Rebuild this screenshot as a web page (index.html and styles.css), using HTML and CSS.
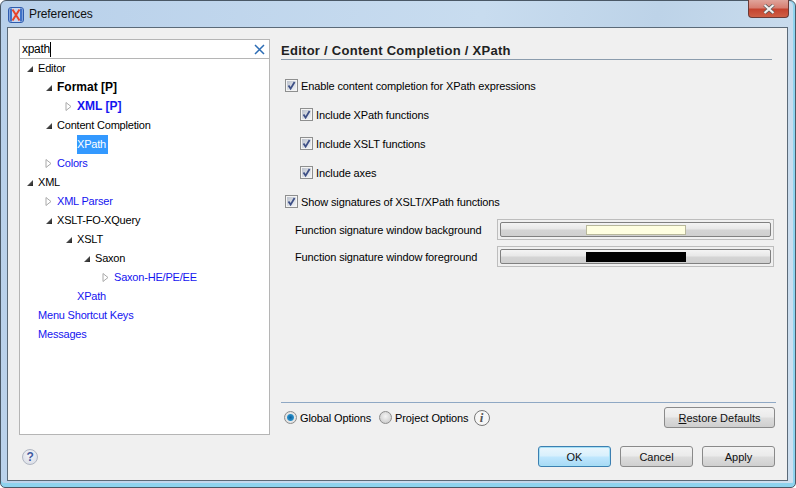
FILE: index.html
```html
<!DOCTYPE html>
<html lang="en">
<head>
  <meta charset="UTF-8">
  <title>Preferences</title>
  <link rel="stylesheet" href="styles.css">
</head>
<body>
  <svg class="defs" width="0" height="0">
    <defs>
      <linearGradient id="boxfill" x1="0" y1="0" x2="1" y2="1">
        <stop offset="0" stop-color="#bcc2cd"/>
        <stop offset="1" stop-color="#f2f4f7"/>
      </linearGradient>
      <linearGradient id="arrowfill" x1="0" y1="0" x2="1" y2="1">
        <stop offset="0" stop-color="#777"/>
        <stop offset="1" stop-color="#222"/>
      </linearGradient>
      <symbol id="check" viewBox="0 0 13 13">
        <rect x="0.5" y="0.5" width="12" height="12" fill="#f4f4f4" stroke="#8e8f8f"/>
        <rect x="2" y="2" width="9" height="9" fill="url(#boxfill)"/>
        <path d="M3.5 6.5 L5.6 9.6 L9.6 3" fill="none" stroke="#3d4f86" stroke-width="1.8"/>
      </symbol>
      <symbol id="open" viewBox="0 0 9 9">
        <path d="M8 2 V8 H2 Z" fill="url(#arrowfill)"/>
      </symbol>
      <symbol id="closed" viewBox="0 0 9 11">
        <path d="M2 1.5 L7 5.5 L2 9.5 Z" fill="#fff" stroke="#a9a9a9"/>
      </symbol>
    </defs>
  </svg>

  <div class="window">
    <div class="titlebar">
      <svg class="app-icon" width="16" height="16" viewBox="0 0 16 16">
        <rect x="0.5" y="0.5" width="15" height="15" rx="2.5" fill="#c9d6ee" stroke="#2f5cae"/>
        <rect x="1.5" y="1.5" width="2.5" height="13" fill="#3f72c8"/>
        <rect x="12" y="1.5" width="2.5" height="13" fill="#3f72c8"/>
        <path d="M4.5 2.5 L11.5 13.5 M11.5 2.5 L4.5 13.5" stroke="#e8432a" stroke-width="2"/>
      </svg>
      <span class="title">Preferences</span>
      <div class="close">
        <svg width="14" height="10" viewBox="0 0 14 10">
          <path d="M2.5 1 L11.5 9 M11.5 1 L2.5 9" stroke="#5a5a5a" stroke-width="3.6"/>
          <path d="M2.5 1 L11.5 9 M11.5 1 L2.5 9" stroke="#f2f2f2" stroke-width="2.2"/>
        </svg>
      </div>
    </div>

    <div class="client">
      <div class="main">
        <div class="left">
          <div class="search">
            <span class="search-text">xpath</span><span class="caret"></span>
            <svg class="search-clear" width="11" height="11" viewBox="0 0 11 11">
              <path d="M1 1 L10 10 M10 1 L1 10" stroke="#2d6db5" stroke-width="1.5"/>
            </svg>
          </div>
          <ul class="tree">
            <li class="row d0"><svg class="arrow"><use href="#open" width="9" height="9" y="1"/></svg><span>Editor</span></li>
            <li class="row d1 bold"><svg class="arrow"><use href="#open" width="9" height="9" y="1"/></svg><span>Format [P]</span></li>
            <li class="row d2 bold link"><svg class="arrow"><use href="#closed" width="9" height="11"/></svg><span>XML [P]</span></li>
            <li class="row d1"><svg class="arrow"><use href="#open" width="9" height="9" y="1"/></svg><span>Content Completion</span></li>
            <li class="row d2 leaf"><span class="selected">XPath</span></li>
            <li class="row d1 link"><svg class="arrow"><use href="#closed" width="9" height="11"/></svg><span>Colors</span></li>
            <li class="row d0"><svg class="arrow"><use href="#open" width="9" height="9" y="1"/></svg><span>XML</span></li>
            <li class="row d1 link"><svg class="arrow"><use href="#closed" width="9" height="11"/></svg><span>XML Parser</span></li>
            <li class="row d1"><svg class="arrow"><use href="#open" width="9" height="9" y="1"/></svg><span>XSLT-FO-XQuery</span></li>
            <li class="row d2"><svg class="arrow"><use href="#open" width="9" height="9" y="1"/></svg><span>XSLT</span></li>
            <li class="row d3"><svg class="arrow"><use href="#open" width="9" height="9" y="1"/></svg><span>Saxon</span></li>
            <li class="row d4 link"><svg class="arrow"><use href="#closed" width="9" height="11"/></svg><span>Saxon-HE/PE/EE</span></li>
            <li class="row d2 link leaf"><span>XPath</span></li>
            <li class="row d0 link leaf"><span>Menu Shortcut Keys</span></li>
            <li class="row d0 link leaf"><span>Messages</span></li>
          </ul>
        </div>

        <div class="right">
          <h2 class="heading">Editor / Content Completion / XPath</h2>
          <div class="options">
            <label class="option"><svg class="box"><use href="#check"/></svg>Enable content completion for XPath expressions</label>
            <label class="option sub"><svg class="box"><use href="#check"/></svg>Include XPath functions</label>
            <label class="option sub"><svg class="box"><use href="#check"/></svg>Include XSLT functions</label>
            <label class="option sub"><svg class="box"><use href="#check"/></svg>Include axes</label>
            <label class="option"><svg class="box"><use href="#check"/></svg>Show signatures of XSLT/XPath functions</label>
          </div>
          <div class="colors">
            <div class="color-row">
              <span class="color-label">Function signature window background</span>
              <div class="color-frame"><div class="color-btn"><span class="swatch swatch-bg"></span></div></div>
            </div>
            <div class="color-row">
              <span class="color-label">Function signature window foreground</span>
              <div class="color-frame"><div class="color-btn"><span class="swatch swatch-fg"></span></div></div>
            </div>
          </div>
          <div class="scope">
            <span class="radio radio-on"></span><span class="scope-label">Global Options</span>
            <span class="radio"></span><span class="scope-label">Project Options</span>
            <span class="info">i</span>
            <button class="btn btn-restore"><u>R</u>estore Defaults</button>
          </div>
        </div>
      </div>

      <div class="footer">
        <span class="help">?</span>
        <div class="actions">
          <button class="btn btn-ok">OK</button>
          <button class="btn">Cancel</button>
          <button class="btn">Apply</button>
        </div>
      </div>
    </div>
  </div>
</body>
</html>
```

FILE: styles.css
```css
* {
  box-sizing: border-box;
}
html, body {
  margin: 0;
  padding: 0;
  background: #fff;
}
body {
  width: 796px;
  height: 488px;
  overflow: hidden;
  font-family: "Liberation Sans", Arial, sans-serif;
  font-size: 11px;
  letter-spacing: -0.12px;
  color: #000;
}
.defs {
  position: absolute;
}

.window {
  width: 796px;
  height: 488px;
  display: flex;
  flex-direction: column;
  border: 1px solid #4a5866;
  border-radius: 6px 6px 5px 5px;
  background: linear-gradient(100deg, #b8d0ea 0%, #c8dcef 55%, #bdd3e8 75%, #cfe0f0 100%);
  box-shadow: inset 0 -4px 0 #8ed3ee, inset -2px 0 0 #8ed3ee;
}

.titlebar {
  height: 26px;
  flex: none;
  display: flex;
  align-items: center;
  padding-left: 7px;
  position: relative;
}
.app-icon {
  margin-top: 2px;
}
.title {
  margin-left: 5px;
  font-size: 12px;
  letter-spacing: -0.1px;
  color: #111;
}
.close {
  position: absolute;
  top: -1px;
  right: 6px;
  width: 41px;
  height: 18px;
  display: flex;
  align-items: center;
  justify-content: center;
  border: 1px solid #6b3a36;
  border-top: none;
  border-radius: 0 0 4px 4px;
  background: linear-gradient(#e0a49b 0%, #d77f72 45%, #c5432f 55%, #cf5f45 100%);
}

.client {
  flex: 1;
  margin: 0 7px 6px 6px;
  display: flex;
  flex-direction: column;
  border: 1px solid #5b6a78;
  background: #f0f0f0;
  min-height: 0;
}

.main {
  flex: 1;
  display: flex;
  padding: 11px 3px 0 11px;
  min-height: 0;
}
.left {
  width: 251px;
  flex: none;
  height: 396px;
  display: flex;
  flex-direction: column;
  border: 1px solid #b5b5b5;
  background: #fff;
}
.search {
  height: 19px;
  flex: none;
  display: flex;
  align-items: center;
  padding: 0 4px 0 2px;
  border-bottom: 1px solid #b5b5b5;
  font-size: 12px;
  letter-spacing: -0.3px;
}
.caret {
  width: 1px;
  height: 15px;
  background: #000;
}
.search-clear {
  margin-left: auto;
}

.tree {
  list-style: none;
  margin: 0;
  padding: 0;
  letter-spacing: -0.2px;
}
.row {
  height: 19px;
  display: flex;
  align-items: center;
  white-space: nowrap;
}
.row span {
  margin-bottom: 2px;
}
.arrow {
  width: 9px;
  height: 11px;
  margin-right: 4px;
  flex: none;
}
.d0 { padding-left: 5px; }
.d1 { padding-left: 24px; }
.d2 { padding-left: 44px; }
.d3 { padding-left: 62px; }
.d4 { padding-left: 81px; }
.leaf { margin-left: 13px; }
.bold {
  font-weight: bold;
  font-size: 12px;
  letter-spacing: 0;
}
.link { color: #1414f0; }
.row .selected {
  display: block;
  margin-bottom: 0;
  height: 19px;
  line-height: 18px;
  width: 31px;
  background: #3399ff;
  color: #fff;
}

.right {
  flex: 1;
  min-width: 0;
  margin-left: 11px;
  display: flex;
  flex-direction: column;
}
.heading {
  margin: 0;
  height: 21px;
  padding-top: 4px;
  width: 491px;
  font-size: 13px;
  letter-spacing: 0.27px;
  font-weight: bold;
  color: #222;
  border-bottom: 1px solid #8b9cad;
}
.options {
  margin-top: 18px;
  display: flex;
  flex-direction: column;
  gap: 14px;
}
.option {
  height: 15px;
  display: flex;
  align-items: center;
  padding-left: 4px;
}
.option.sub {
  padding-left: 19px;
}
.box {
  width: 13px;
  height: 13px;
  margin-right: 3px;
  flex: none;
}

.colors {
  margin-top: 10px;
  display: flex;
  flex-direction: column;
  gap: 6px;
}
.color-row {
  display: flex;
  align-items: center;
  padding-left: 14px;
}
.color-label {
  width: 202px;
  flex: none;
  white-space: nowrap;
}
.color-frame {
  width: 277px;
  height: 21px;
  padding: 2px;
  border: 1px solid #bdbdbd;
}
.color-btn {
  height: 15px;
  display: flex;
  align-items: center;
  justify-content: center;
  border: 1px solid #808080;
  border-radius: 2px;
  background: linear-gradient(#f4f4f4 0%, #e8e8e8 45%, #d4d4d4 55%, #cfcfcf 100%);
}
.swatch {
  width: 100px;
  height: 10px;
}
.swatch-bg {
  background: #ffffe1;
  border: 1px solid #b8b89c;
}
.swatch-fg {
  background: #000;
}

.scope {
  margin-top: auto;
  width: 495px;
  height: 34px;
  display: flex;
  align-items: center;
  border-top: 1px solid #8fa8c4;
  padding: 0 1px 4px 3px;
}
.radio {
  width: 13px;
  height: 13px;
  margin-right: 3px;
  border: 1px solid #8c8c8c;
  border-radius: 50%;
  background: radial-gradient(circle at 50% 40%, #f4f4f4, #c4c4c4);
}
.radio-on {
  background: radial-gradient(circle, #0c5f9e 0, #2a8fc8 3px, #e8e8e8 4px, #d8d8d8 100%);
}
.scope-label {
  margin-right: 8px;
}
.info {
  width: 16px;
  height: 16px;
  margin-left: -3px;
  border: 1px solid #777;
  border-radius: 50%;
  text-align: center;
  line-height: 14px;
  font-family: "Liberation Serif", serif;
  font-style: italic;
  font-weight: bold;
  font-size: 13px;
  color: #555;
  background: #f6f6f6;
}

.btn {
  width: 73px;
  height: 21px;
  padding: 0;
  font-family: inherit;
  font-size: 11px;
  letter-spacing: 0;
  color: #111;
  border: 1px solid #8a8a8a;
  border-radius: 3px;
  background: linear-gradient(#f3f3f3 0%, #ebebeb 45%, #dcdcdc 55%, #cfcfcf 100%);
}
.btn-restore {
  width: 111px;
  margin-left: auto;
}
.btn-ok {
  border-color: #3c7fb1;
  box-shadow: inset 0 0 0 1px #a6e0f5;
  background: linear-gradient(#eaf6fd 0%, #d9f0fc 45%, #bee6fd 55%, #a7d9f5 100%);
}

.footer {
  height: 44px;
  flex: none;
  display: flex;
  align-items: flex-start;
  justify-content: space-between;
  padding: 10px 12px 0 14px;
}
.help {
  width: 16px;
  height: 16px;
  margin-top: 3px;
  border: 1px solid #b0b6c2;
  border-radius: 50%;
  text-align: center;
  line-height: 14px;
  font-weight: bold;
  font-size: 12px;
  color: #3f5aa0;
  background: radial-gradient(circle at 50% 35%, #f4f5f8, #d6dae4);
}
.actions {
  display: flex;
  gap: 9px;
}
```
